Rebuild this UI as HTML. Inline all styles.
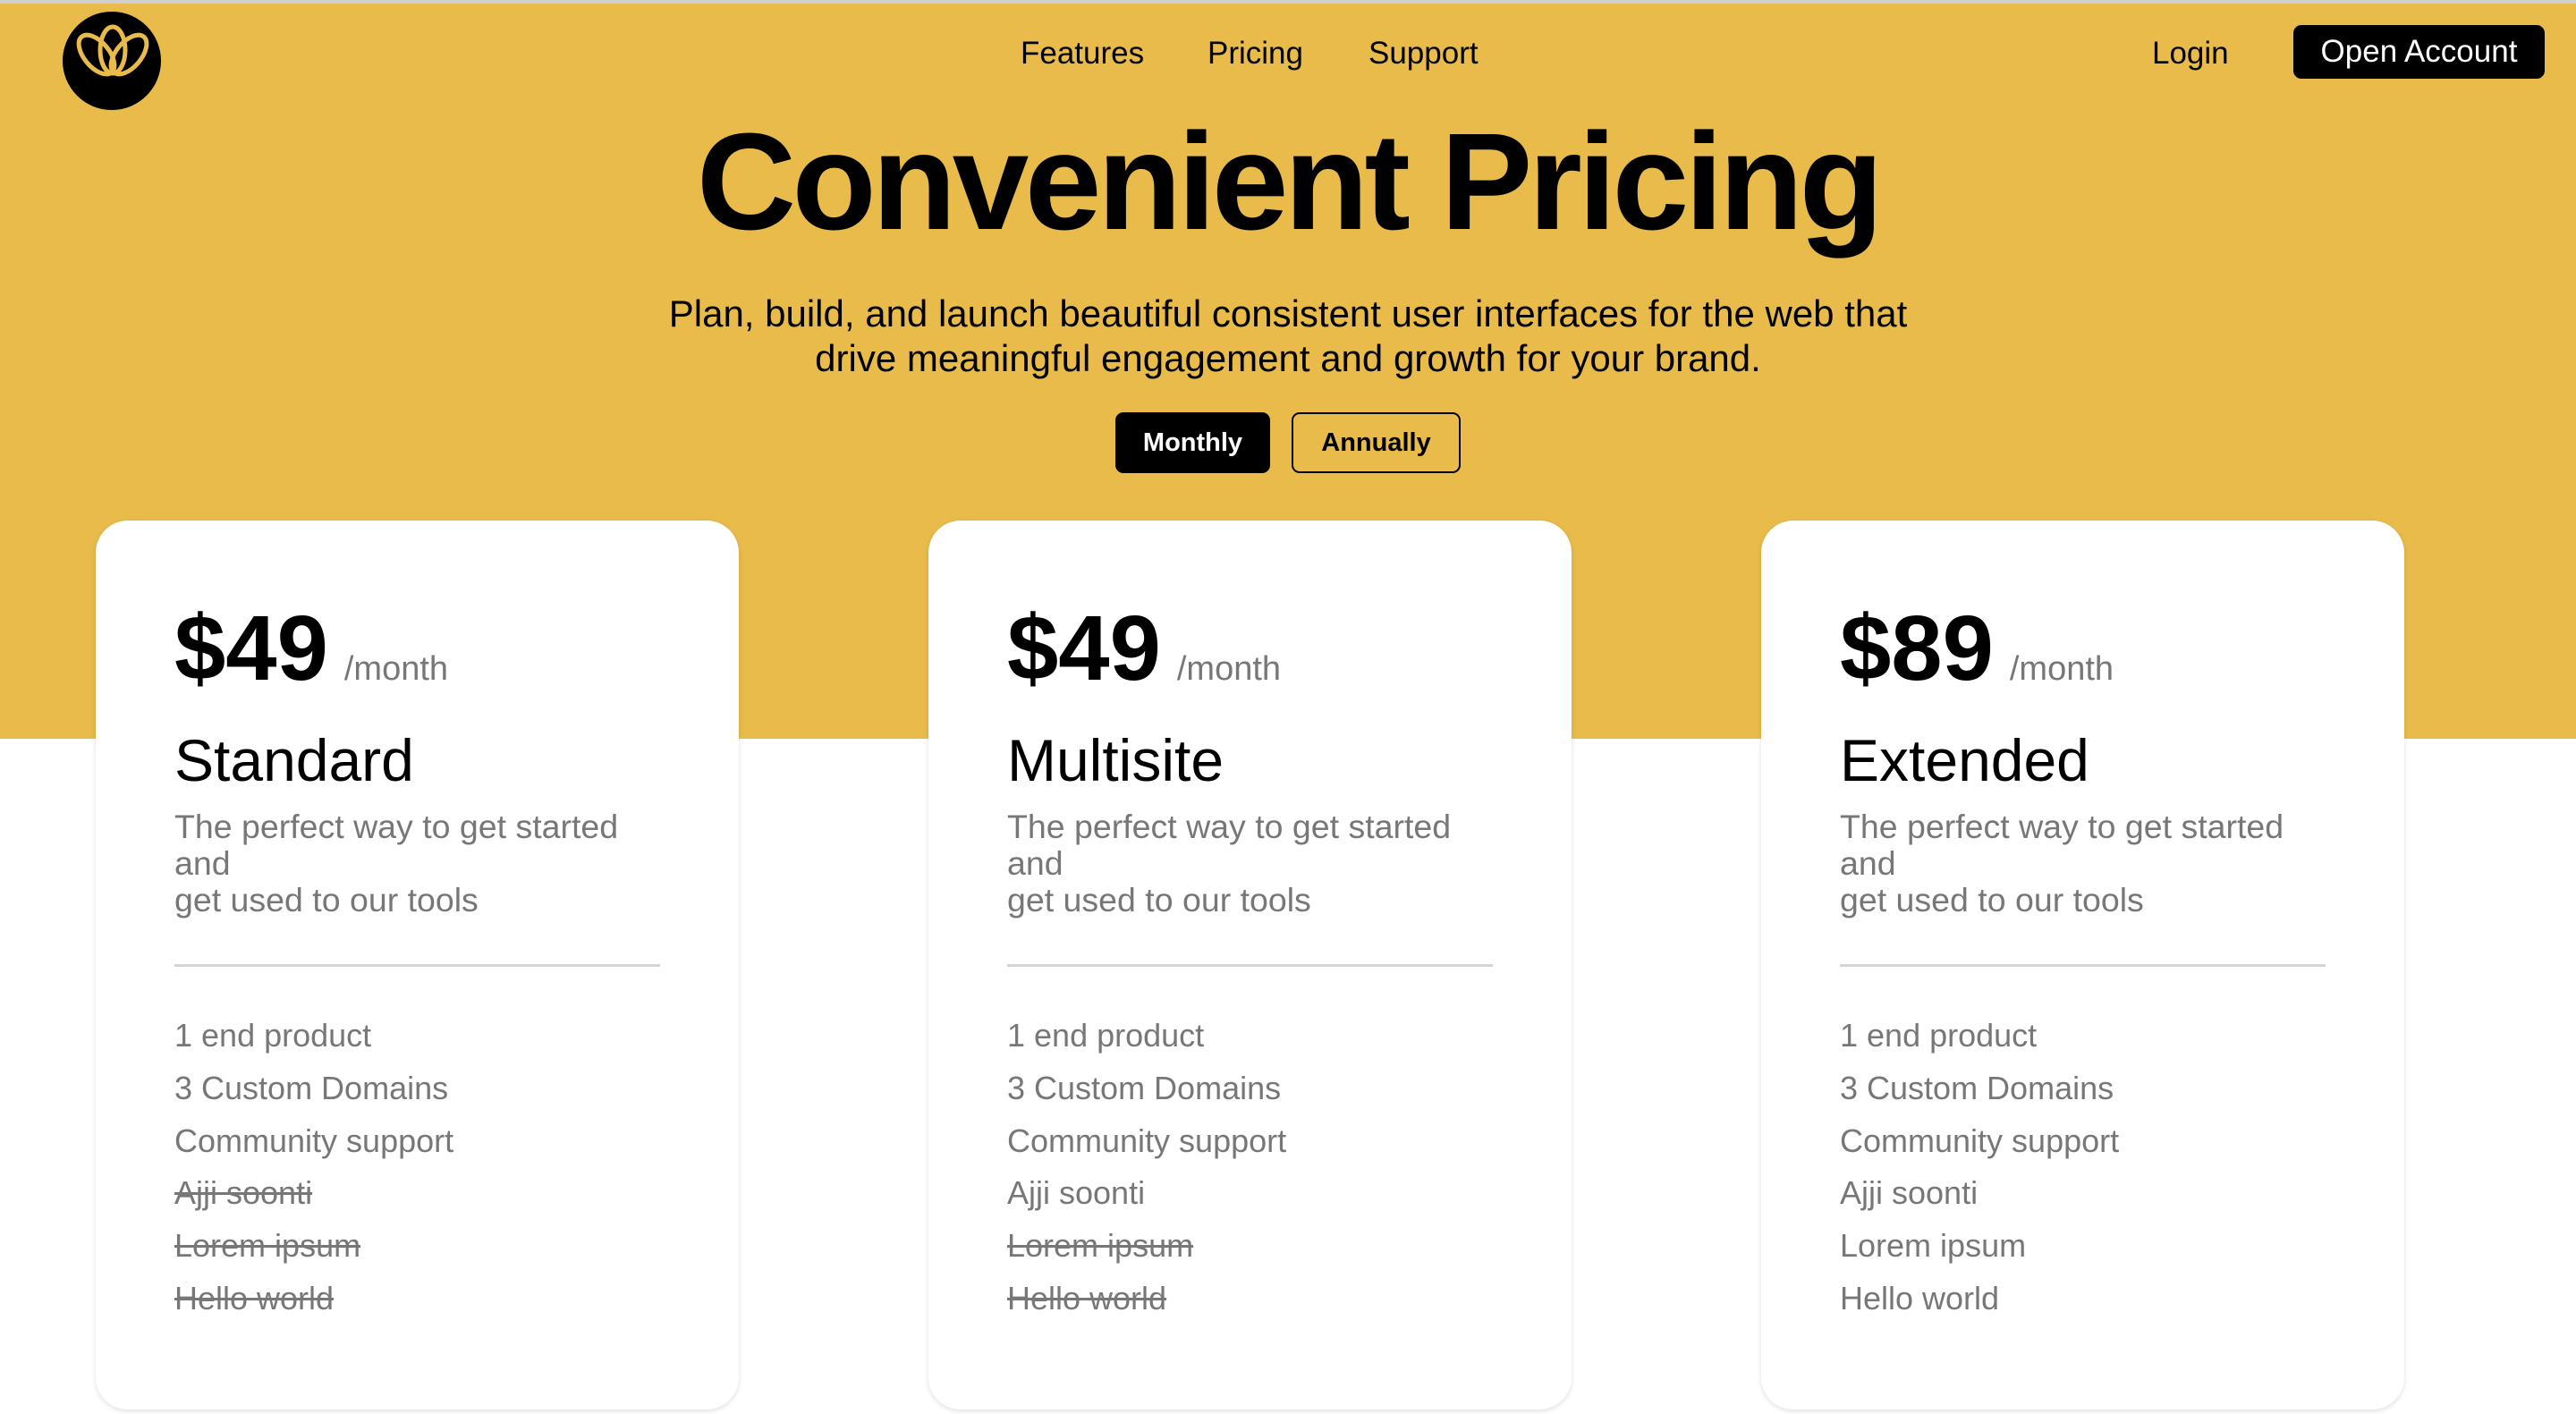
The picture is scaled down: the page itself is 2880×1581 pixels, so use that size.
<!DOCTYPE html>
<html><head><meta charset="utf-8"><style>
*{margin:0;padding:0;box-sizing:border-box}
body{width:2880px;height:1581px;overflow:hidden;background:#fff;font-family:"Liberation Sans",sans-serif;position:relative}
.hero{position:absolute;left:0;top:0;width:2880px;height:826px;background:#E8BB4B;border-top:4px solid #cfcfcf}
.abs{position:absolute;white-space:nowrap}
.nav{font-size:35px;color:#000;top:40px}
.btn{position:absolute;border-radius:9px;font-weight:bold;font-size:29px;display:flex;align-items:center;justify-content:center}
.card{position:absolute;top:582px;width:719px;height:994px;background:#fff;border-radius:36px;box-shadow:0 2px 6px rgba(0,0,0,.12)}
.price{position:absolute;left:88px;top:84px;font-size:103px;font-weight:bold;color:#000;white-space:nowrap}
.price span{font-size:38px;font-weight:normal;color:#777;margin-left:18px}
.name{position:absolute;left:88px;top:230px;font-size:66px;color:#000}
.desc{position:absolute;left:88px;top:322px;font-size:37.5px;color:#777;line-height:41px}
.hr{position:absolute;left:88px;top:496px;width:543px;height:3px;background:#d4d4d4}
.feat{position:absolute;left:88px;top:547px;font-size:36px;color:#777;line-height:58.8px}
.s{text-decoration:line-through}
</style></head><body>
<div class="hero"></div>
<svg class="abs" style="left:70px;top:13px" width="110" height="110" viewBox="0 0 110 110">
<circle cx="55" cy="55" r="55" fill="#000"/>
<g fill="none" stroke="#E8BB4B" stroke-width="5">
<ellipse cx="56" cy="43" rx="14" ry="26"/>
<ellipse cx="38" cy="48" rx="14" ry="26" transform="rotate(-40 38 48)"/>
<ellipse cx="74" cy="48" rx="14" ry="26" transform="rotate(40 74 48)"/>
</g></svg>
<div class="abs nav" style="left:1141px">Features</div>
<div class="abs nav" style="left:1350px">Pricing</div>
<div class="abs nav" style="left:1530px">Support</div>
<div class="abs nav" style="left:2406px">Login</div>
<div class="btn" style="left:2564px;top:28px;width:281px;height:60px;background:#000;color:#fff;font-weight:normal;font-size:35px">Open Account</div>
<div class="abs" style="left:0;width:2880px;text-align:center;top:118px;font-size:154px;font-weight:bold;letter-spacing:-4.5px;color:#000;line-height:170px">Convenient Pricing</div>
<div class="abs" style="left:0;width:2880px;text-align:center;top:326px;font-size:42px;line-height:50px;color:#000">Plan, build, and launch beautiful consistent user interfaces for the web that<br>drive meaningful engagement and growth for your brand.</div>
<div class="btn" style="left:1247px;top:461px;width:173px;height:68px;background:#000;color:#fff">Monthly</div>
<div class="btn" style="left:1444px;top:461px;width:189px;height:68px;border:2px solid #000;color:#000">Annually</div>

<div class="card" style="left:107px">
<div class="price">$49<span>/month</span></div>
<div class="name">Standard</div>
<div class="desc">The perfect way to get started<br>and<br>get used to our tools</div>
<div class="hr"></div>
<div class="feat">1 end product<br>3 Custom Domains<br>Community support<br><span class="s">Ajji soonti</span><br><span class="s">Lorem ipsum</span><br><span class="s">Hello world</span></div>
</div>
<div class="card" style="left:1038px">
<div class="price">$49<span>/month</span></div>
<div class="name">Multisite</div>
<div class="desc">The perfect way to get started<br>and<br>get used to our tools</div>
<div class="hr"></div>
<div class="feat">1 end product<br>3 Custom Domains<br>Community support<br>Ajji soonti<br><span class="s">Lorem ipsum</span><br><span class="s">Hello world</span></div>
</div>
<div class="card" style="left:1969px">
<div class="price">$89<span>/month</span></div>
<div class="name">Extended</div>
<div class="desc">The perfect way to get started<br>and<br>get used to our tools</div>
<div class="hr"></div>
<div class="feat">1 end product<br>3 Custom Domains<br>Community support<br>Ajji soonti<br>Lorem ipsum<br>Hello world</div>
</div>
</body></html>
